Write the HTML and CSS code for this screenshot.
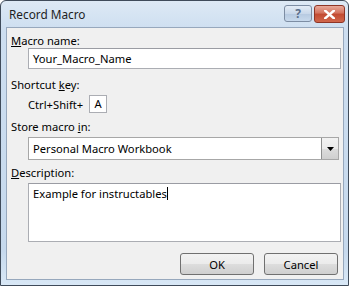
FILE: index.html
```html
<!DOCTYPE html>
<html lang="en">
<head>
    <meta charset="UTF-8">
    <title>Record Macro</title>
    <link rel="stylesheet" href="styles.css">
</head>
<body>
    <div class="window">
        <div class="titlebar">
            <span class="title">Record Macro</span>
            <div class="caption-buttons">
                <span class="cap-btn help">?</span>
                <span class="cap-btn close">
                    <svg width="11" height="9" viewBox="0 0 11 9"><path d="M1 0.5 L10 8.5 M10 0.5 L1 8.5" stroke="#fff" stroke-width="2.4" stroke-linecap="square"/></svg>
                </span>
            </div>
        </div>

        <div class="client">
            <div class="field-label"><u>M</u>acro name:</div>
            <div class="textbox name-box">Your_Macro_Name</div>

            <div class="field-label gap-lg">Shortcut <u>k</u>ey:</div>
            <div class="shortcut-row">
                <span class="shortcut-prefix">Ctrl+Shift+</span>
                <span class="key-box">A</span>
            </div>

            <div class="field-label gap-md">Store macro <u>i</u>n:</div>
            <div class="combo">
                <span class="combo-text">Personal Macro Workbook</span>
                <span class="combo-btn">
                    <svg width="7" height="4" viewBox="0 0 7 4"><path d="M0 0 H7 L3.5 4 Z" fill="#000"/></svg>
                </span>
            </div>

            <div class="field-label gap-sm"><u>D</u>escription:</div>
            <div class="textbox desc-box">Example for instructables<span class="caret"></span></div>

            <div class="buttons">
                <button class="btn">OK</button>
                <button class="btn">Cancel</button>
            </div>
        </div>
    </div>
</body>
</html>
```

FILE: styles.css
```css
body {
    margin: 0;
    background-color: #ffffff;
    font-family: 'Noto Sans', 'Open Sans', sans-serif;
    font-size: 11.2px;
    color: #000;
}
.window {
    width: 349px;
    height: 286px;
    box-sizing: border-box;
    border: 1px solid #3f4b5a;
    border-radius: 6px 6px 0 0;
    background: linear-gradient(to bottom, #dde9f5 0px, #cddef0 30px, #c6d9ed 250px, #d9e8f6 100%);
    padding: 0 4px 5px 5px;
    display: flex;
    flex-direction: column;
}
.titlebar {
    height: 26px;
    flex-shrink: 0;
    display: flex;
    align-items: flex-start;
    justify-content: space-between;
}
.title {
    margin-top: 5px;
    margin-left: 3px;
    font-size: 11.8px;
    line-height: 17px;
    color: #1e1e1e;
}
.caption-buttons {
    display: flex;
    gap: 2px;
    margin-top: 4px;
    margin-right: -1px;
}
.cap-btn {
    height: 17px;
    border: 1px solid #7d8da3;
    border-radius: 3px;
    box-sizing: border-box;
    display: flex;
    align-items: center;
    justify-content: center;
}
.help {
    width: 28px;
    background: linear-gradient(to bottom, #e3ecf6 0%, #c9d8ea 50%, #b5c9e0 51%, #c8d9ec 100%);
    color: #5a6f8c;
    font-weight: bold;
    font-size: 12px;
}
.close {
    width: 31px;
    height: 18px;
    border-color: #8e3526;
    background: linear-gradient(to bottom, #e9a99a 0%, #d2715c 45%, #c24a31 50%, #d0674c 100%);
}
.client {
    flex: 1;
    background-color: #f0f0f0;
    border: 1px solid #97a8bd;
    padding: 6px 2px 4px 4px;
    display: flex;
    flex-direction: column;
}
.field-label {
    line-height: 14px;
}
.gap-lg {
    margin-top: 9px;
}
.gap-md {
    margin-top: 7px;
}
.gap-sm {
    margin-top: 6px;
}
.textbox {
    margin-left: 17px;
    width: 313px;
    border: 1px solid #abadb3;
    border-top-color: #9a9ca3;
    background-color: #fff;
    box-sizing: border-box;
    padding-left: 4px;
}
.name-box {
    height: 21px;
    line-height: 19px;
}
.shortcut-row {
    margin-top: 3px;
    padding-left: 17px;
    height: 18px;
    display: flex;
    align-items: center;
}
.shortcut-prefix {
    width: 61px;
}
.key-box {
    width: 18px;
    height: 18px;
    border: 1px solid #abadb3;
    background-color: #fff;
    box-sizing: border-box;
    line-height: 16px;
    text-align: center;
}
.combo {
    margin-top: 3px;
    margin-left: 17px;
    width: 311px;
    height: 23px;
    border: 1px solid #a7a7a7;
    background-color: #fff;
    box-sizing: border-box;
    display: flex;
    align-items: center;
    justify-content: space-between;
}
.combo-text {
    padding-left: 4px;
}
.combo-btn {
    width: 17px;
    height: 21px;
    border-left: 1px solid #8e8f8f;
    background: linear-gradient(to bottom, #f2f2f2 0%, #ebebeb 50%, #dddddd 51%, #cfcfcf 100%);
    box-sizing: border-box;
    display: flex;
    align-items: center;
    justify-content: center;
}
.desc-box {
    margin-top: 3px;
    height: 59px;
    padding-top: 2px;
    line-height: 16px;
}
.caret {
    display: inline-block;
    width: 1px;
    height: 13px;
    background-color: #000;
    vertical-align: -2px;
}
.buttons {
    margin-top: 11px;
    display: flex;
    justify-content: flex-end;
    gap: 10px;
    padding-right: 3px;
}
.btn {
    width: 74px;
    height: 22px;
    border: 1px solid #707070;
    border-radius: 3px;
    background: linear-gradient(to bottom, #f2f2f2 0%, #ebebeb 50%, #dddddd 51%, #cfcfcf 100%);
    font-family: 'Noto Sans', 'Open Sans', sans-serif;
    font-size: 11.2px;
    color: #000;
    padding: 0;
}
```
